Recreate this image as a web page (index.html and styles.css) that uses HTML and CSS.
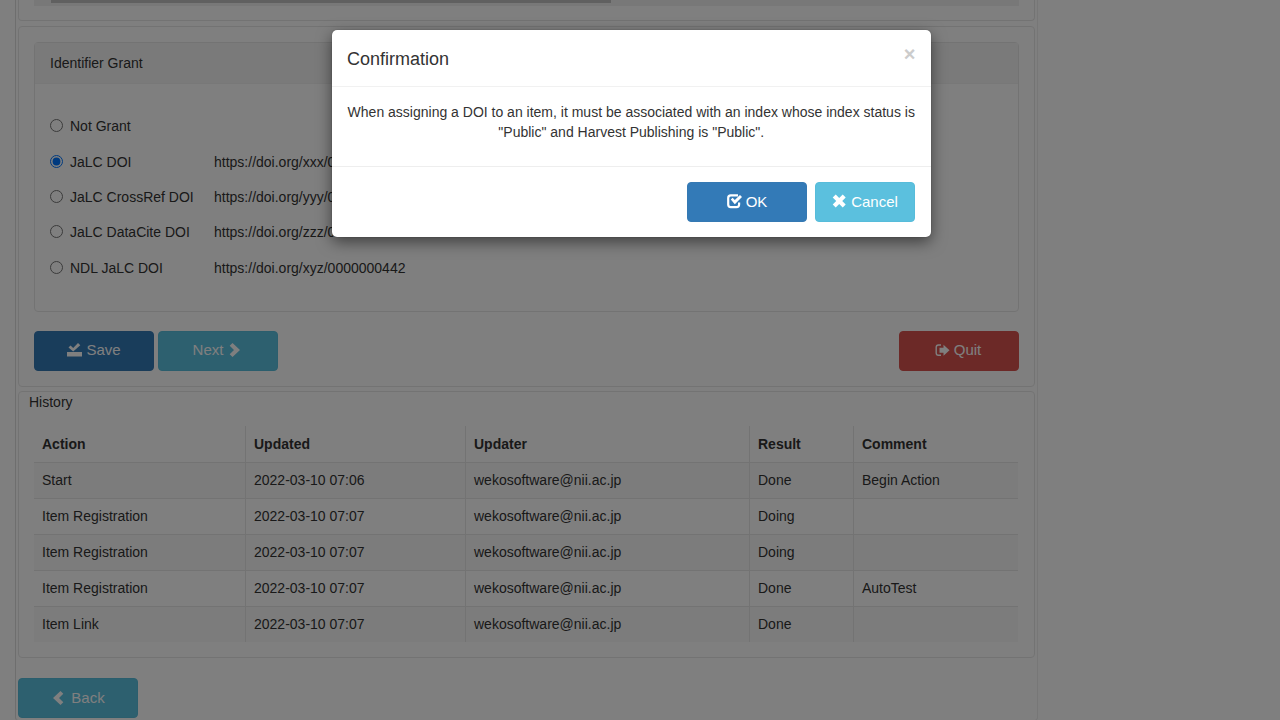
FILE: index.html
```html
<!DOCTYPE html>
<html lang="en">
<head>
<meta charset="utf-8">
<title>Workflow</title>
<link rel="stylesheet" href="styles.css">
</head>
<body>
<main class="workflow">
  <section class="panel progress"><div class="scroll"><div class="thumb"></div></div></section>
  <section class="panel step">
    <div class="grant">
      <div class="grant-head">Identifier Grant</div>
      <div class="grant-body">
        <label class="choice"><input type="radio" name="doi"><span class="kind">Not Grant</span></label>
        <label class="choice"><input type="radio" name="doi" checked><span class="kind">JaLC DOI</span><span>https://doi.org/xxx/0000000442</span></label>
        <label class="choice"><input type="radio" name="doi"><span class="kind">JaLC CrossRef DOI</span><span>https://doi.org/yyy/0000000442</span></label>
        <label class="choice"><input type="radio" name="doi"><span class="kind">JaLC DataCite DOI</span><span>https://doi.org/zzz/0000000442</span></label>
        <label class="choice"><input type="radio" name="doi"><span class="kind">NDL JaLC DOI</span><span>https://doi.org/xyz/0000000442</span></label>
      </div>
    </div>
    <div class="actions">
      <button class="btn primary"><svg class="icon" viewBox="0 0 15 15"><path d="M0 9h15v4.500H0zM1.500 4.500l2-2 2.700 2.500L11 0l2.300 2.200L6.200 8.500z"/></svg>Save</button>
      <button class="btn info">Next<svg class="icon after" viewBox="0 0 15 15"><path d="M4.500 0 12 7 4.500 14 1.700 11.200 6 7 1.700 2.800z"/></svg></button>
      <button class="btn danger"><svg class="icon" viewBox="0 0 15 15"><path d="M6 2H3.500Q1.200 2 1.200 4.300V10Q1.200 12.300 3.500 12.300H6" fill="none" stroke="currentColor" stroke-width="1.400"/><path d="M4.500 4.700H8.500V1.700L14.500 7.200 8.500 12.700V9.700H4.500z"/></svg>Quit</button>
    </div>
  </section>
  <section class="panel history">
    <div class="history-title">History</div>
    <table>
      <colgroup><col class="c-action"><col class="c-updated"><col class="c-updater"><col class="c-result"><col></colgroup>
      <thead><tr><th>Action</th><th>Updated</th><th>Updater</th><th>Result</th><th>Comment</th></tr></thead>
      <tbody>
        <tr><td>Start</td><td>2022-03-10 07:06</td><td>wekosoftware@nii.ac.jp</td><td>Done</td><td>Begin Action</td></tr>
        <tr><td>Item Registration</td><td>2022-03-10 07:07</td><td>wekosoftware@nii.ac.jp</td><td>Doing</td><td></td></tr>
        <tr><td>Item Registration</td><td>2022-03-10 07:07</td><td>wekosoftware@nii.ac.jp</td><td>Doing</td><td></td></tr>
        <tr><td>Item Registration</td><td>2022-03-10 07:07</td><td>wekosoftware@nii.ac.jp</td><td>Done</td><td>AutoTest</td></tr>
        <tr><td>Item Link</td><td>2022-03-10 07:07</td><td>wekosoftware@nii.ac.jp</td><td>Done</td><td></td></tr>
      </tbody>
    </table>
  </section>
  <button class="btn info back"><svg class="icon" viewBox="0 0 15 15"><path d="M9.500 0 2 7 9.500 14 12.300 11.200 8 7 12.300 2.800z"/></svg>Back</button>
</main>
<div class="backdrop">
  <div class="modal" role="dialog">
    <div class="modal-head"><h4 class="modal-title">Confirmation</h4><button class="close">×</button></div>
    <div class="modal-body">When assigning a DOI to an item, it must be associated with an index whose index status is "Public" and Harvest Publishing is "Public".</div>
    <div class="modal-foot">
      <button class="btn primary"><svg class="icon" viewBox="0 0 15 15"><path d="M11 1.300H3.800Q1.200 1.300 1.200 3.900V10.500Q1.200 13.100 3.800 13.100H9.500Q12.100 13.100 12.100 10.500V8.500" fill="none" stroke="currentColor" stroke-width="2.200"/><path d="M3.800 5.500 5.600 3.700 7.800 6 13 1 15 3 7.800 10.200z"/></svg>OK</button>
      <button class="btn info small"><svg class="icon" viewBox="0 0 15 15"><path d="M3.700.5 7.200 4 10.700.5 13.700 3.500 10.200 7 13.700 10.500 10.700 13.500 7.200 10 3.700 13.500.7 10.500 4.200 7 .7 3.500z"/></svg>Cancel</button>
    </div>
  </div>
</div>
</body>
</html>
```
FILE: styles.css
```css
* { box-sizing: border-box; }
body {
  margin: 0;
  height: 720px;
  overflow: hidden;
  background: #fff;
  color: #333;
  font: 14px/20px "Liberation Sans", Arial, sans-serif;
}
.workflow {
  width: 1023px;
  height: 721px;
  margin-left: 15px;
  padding: 0 2px;
  border: 1px solid #eee;
  border-top: 0;
  border-left-color: #ddd;
  border-radius: 0 0 4px 4px;
}
.panel { width: 1017px; border: 1px solid #e7e7e7; border-radius: 4px; }
.progress { height: 21px; border-top: 0; border-radius: 0 0 4px 4px; padding: 0 15px; }
.scroll { height: 6px; background: #f1f1f1; padding-left: 17px; }
.thumb { width: 560px; height: 3px; background: #c1c1c1; }
.step { height: 361px; margin-top: 5px; padding: 15px; }
.grant { height: 270px; border: 1px solid #e7e7e7; border-radius: 4px; }
.grant-head { height: 41px; padding: 10px 15px; background: #f5f5f5; border-bottom: 1px solid #f0f0f0; }
.grant-body { padding: 24.7px 15px; }
.choice { display: flex; align-items: center; height: 35.3px; }
.choice input { width: 13px; height: 13px; margin: 0 7px 1px 0; }
.kind { width: 144px; }
.actions { display: flex; gap: 4px; margin-top: 19px; }
.actions .danger { margin-left: auto; padding-right: 2px; }
.btn {
  display: inline-flex;
  align-items: center;
  justify-content: center;
  width: 120px;
  height: 40px;
  padding: 0 0 2px;
  color: #fff;
  font: 15px/20px "Liberation Sans", Arial, sans-serif;
  border: 1px solid;
  border-radius: 4px;
}
.primary { background: #337ab7; border-color: #3579b3; }
.info { background: #5bc0de; border-color: #57bcda; }
.danger { background: #d9534f; border-color: #d9534f; }
.small { width: 100px; }
.icon { width: 15px; height: 15px; margin-right: 4px; fill: currentColor; }
.icon.after { margin: 0 0 0 5px; }
.back { padding-bottom: 0; }
.back .icon { margin-right: 5px; }
.history { height: 267px; margin: 4px 0 20px; padding: 0 15px; }
.history-title { height: 34px; margin-left: -5px; }
table { width: 984px; table-layout: fixed; border-collapse: separate; border-spacing: 0; }
.c-action { width: 212px; }
.c-updated { width: 220px; }
.c-updater { width: 284px; }
.c-result { width: 104px; }
th, td { height: 36px; padding: 0 8px; text-align: left; border-right: 1px solid #e7e7e7; }
th:last-child, td:last-child { border-right: 0; }
td { padding-bottom: 2px; border-top: 1px solid #e7e7e7; }
tbody tr:nth-child(odd) { background: #f9f9f9; }
.backdrop { position: absolute; inset: 0; padding: 30px 0 0 332px; background: rgba(0, 0, 0, .5); }
.modal {
  width: 598.500px;
  height: 207px;
  background: #fff;
  border-radius: 5px;
  box-shadow: 0 5px 15px rgba(0, 0, 0, .5), 0 0 1px rgba(0, 0, 0, .5);
}
.modal-head { display: flex; justify-content: space-between; height: 57px; padding: 16px 15px 0; border-bottom: 1px solid #f1f1f1; }
.modal-title { margin: 1px 0 0; font-weight: 400; font-size: 18px; line-height: 25px; }
.close { height: 16px; padding: 0; border: 0; background: none; color: #ccc; font: bold 20px/16px "Liberation Sans", Arial, sans-serif; }
.modal-body { height: 79px; padding: 15px; text-align: center; }
.modal-foot { display: flex; justify-content: flex-end; gap: 8px; padding: 15px 15.5px; border-top: 1px solid #eee; }
.modal-foot .btn { padding-bottom: 0; }
.modal-foot .icon { margin-bottom: 2px; }
```
